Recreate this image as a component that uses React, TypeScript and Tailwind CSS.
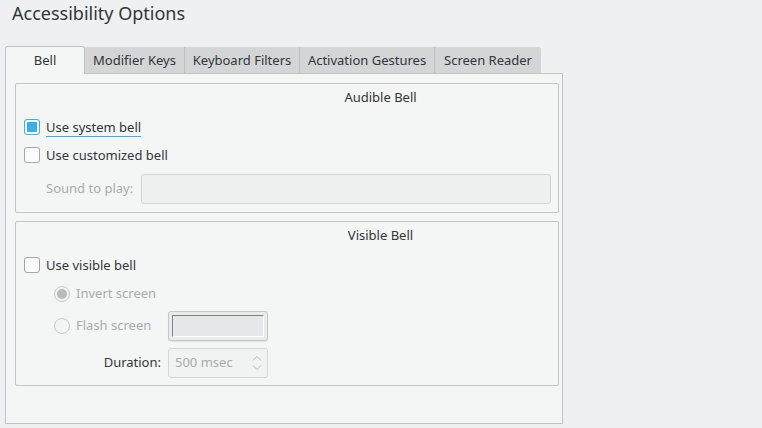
import React from "react";

const TABS = ["Modifier Keys", "Keyboard Filters", "Activation Gestures", "Screen Reader"];
const TAB_WIDTHS = ["w-[100px]", "w-[115px]", "w-[135px]", "w-[106px]"];

function CheckBox({ checked, focused, label }: { checked?: boolean; focused?: boolean; label: string }) {
  return (
    <div className="flex items-center h-[28px]">
      <span
        className={`w-[16px] h-[16px] rounded-[3px] border flex items-center justify-center bg-[#fcfcfc] ${
          checked ? "border-[#3daee9]" : "border-[#a4a6a8]"
        }`}
      >
        {checked && <span className="w-[10px] h-[10px] bg-[#3daee9] rounded-[1px]" />}
      </span>
      <span
        className={`ml-[6px] leading-[18px] text-[#31363b] ${focused ? "border-b border-[#3daee9]" : ""}`}
      >
        {label}
      </span>
    </div>
  );
}

function Radio({ checked, label }: { checked?: boolean; label: string }) {
  return (
    <div className="flex items-center">
      <span className="w-[16px] h-[16px] rounded-full border border-[#c6c7c8] bg-[#f3f4f4] flex items-center justify-center">
        {checked && <span className="w-[10px] h-[10px] rounded-full bg-[#b9babb]" />}
      </span>
      <span className="ml-[6px] text-[#a9abad]">{label}</span>
    </div>
  );
}

function GroupBox({ title, children, className }: { title: string; children: React.ReactNode; className: string }) {
  return (
    <div className={`border border-[#c3c4c6] rounded-[2px] pt-[4px] pl-[8px] pr-[7px] ${className}`}>
      <div className="h-[18px] leading-[18px] text-[#31363b] pl-[186px] text-center">{title}</div>
      <div className="mt-[7px]">{children}</div>
    </div>
  );
}

export default function App() {
  return (
    <div
      className="w-[762px] h-[428px] bg-[#eff0f1] text-[13px] overflow-hidden"
      style={{ fontFamily: '"Noto Sans", "Open Sans", sans-serif' }}
    >
      {/* Header */}
      <div className="h-[46px] pl-[12px] text-[18px] leading-[26px] text-[#31363b]">Accessibility Options</div>

      <div className="pl-[5px]">
        {/* Tab bar */}
        <div className="flex items-end h-[27px] relative z-10">
          <div className="w-[80px] h-[28px] -mb-px pt-[1px] bg-[#f4f5f5] border border-b-0 border-[#c2c3c5] rounded-t-[3px] flex items-center justify-center text-[#31363b]">
            Bell
          </div>
          {TABS.map((t, i) => (
            <div
              key={t}
              className={`${TAB_WIDTHS[i]} h-[26px] pt-[1px] bg-[#d3d5d7] border-r border-[#bdbfc1] flex items-center justify-center text-[#31363b] ${
                i === TABS.length - 1 ? "rounded-tr-[3px] border-r-0" : ""
              }`}
            >
              {t}
            </div>
          ))}
        </div>

        {/* Panel */}
        <div className="w-[558px] h-[351px] bg-[#f4f5f5] border border-[#c2c3c5] pt-[9px] pl-[9px]">
          <GroupBox title="Audible Bell" className="w-[544px] h-[130px]">
            <CheckBox checked focused label="Use system bell" />
            <CheckBox label="Use customized bell" />
            <div className="flex items-center mt-[5px] h-[30px] pl-[22px]">
              <span className="text-[#a9abad] w-[95px]">Sound to play:</span>
              <div className="flex-1 h-[30px] border border-[#d2d3d4] rounded-[3px] bg-[#eff0f0]" />
            </div>
          </GroupBox>

          <GroupBox title="Visible Bell" className="w-[544px] h-[165px] mt-[8px]">
            <CheckBox label="Use visible bell" />
            <div className="pl-[30px]">
              <div className="h-[28px] mt-[1px] flex items-center">
                <Radio checked label="Invert screen" />
              </div>
              <div className="flex items-center mt-[3px] h-[30px]">
                <div className="w-[107px]">
                  <Radio label="Flash screen" />
                </div>
                <div className="ml-[7px] w-[100px] h-[30px] rounded-[3px] border border-[#c5c6c7] bg-[#e9eaeb] shadow-[0_1px_1px_rgba(0,0,0,0.08)] flex items-center justify-center">
                  <div className="w-[92px] h-[22px] bg-[#e6e7e8] border-t border-l border-[#7f8183] border-b-[#ffffff] border-r-[#ffffff] border-b border-r" />
                </div>
              </div>
              <div className="flex items-center mt-[7px] h-[30px]">
                <div className="w-[107px] text-right text-[#31363b]">Duration:</div>
                <div className="ml-[7px] w-[100px] h-[30px] rounded-[3px] border border-[#d5d6d7] bg-[#f1f2f2] flex items-center pl-[6px] pr-[4px]">
                  <span className="flex-1 text-[#aaacae]">500 msec</span>
                  <svg width="12" height="20" viewBox="0 0 12 20" fill="none" stroke="#b4b6b8" strokeWidth="1">
                    <path d="M2 7.5 L6 3.5 L10 7.5" />
                    <path d="M2 12.5 L6 16.5 L10 12.5" />
                  </svg>
                </div>
              </div>
            </div>
          </GroupBox>
        </div>
      </div>
    </div>
  );
}
